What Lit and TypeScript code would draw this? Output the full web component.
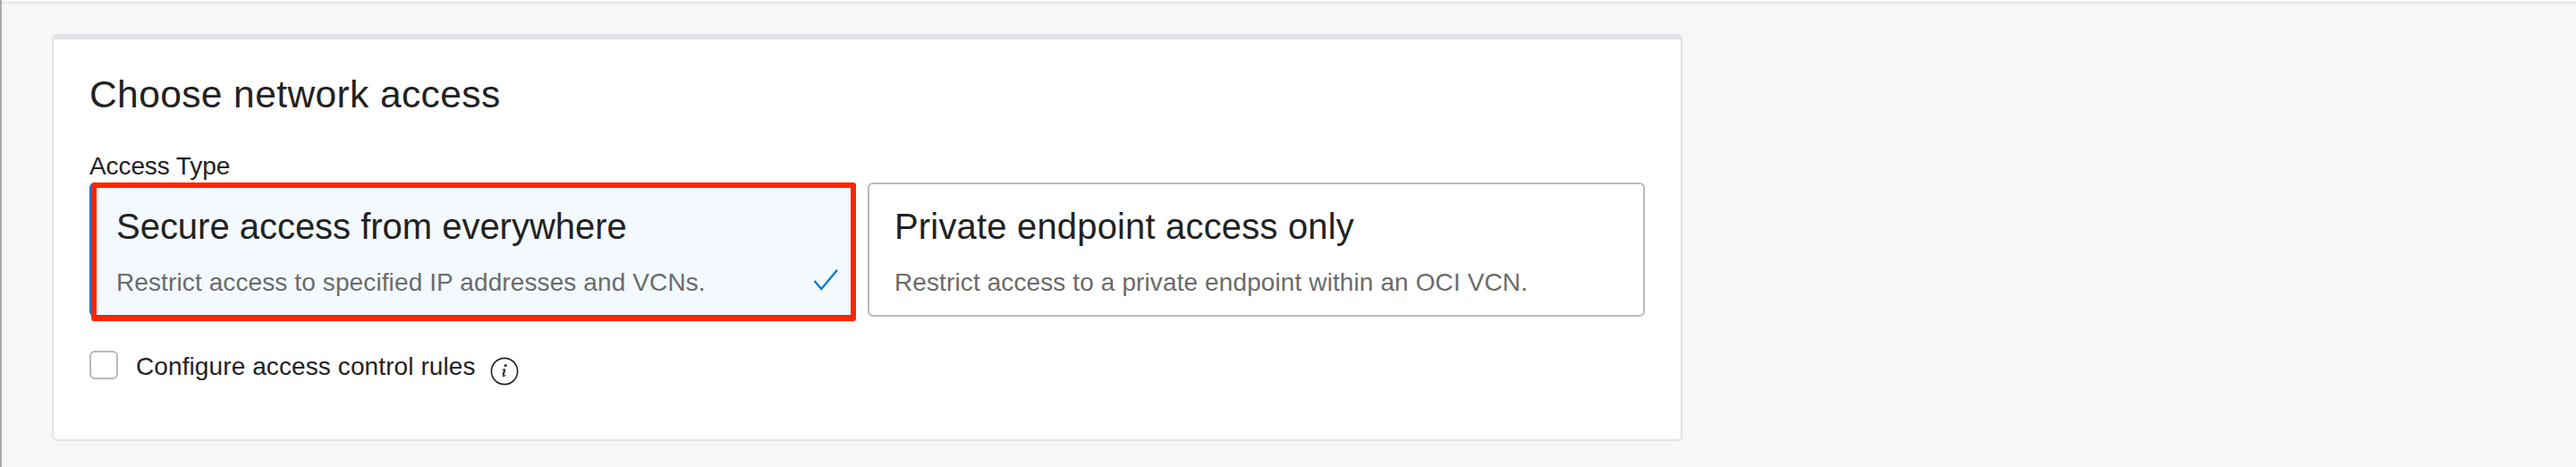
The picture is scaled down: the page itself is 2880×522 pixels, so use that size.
import { LitElement, html, css } from "lit";
import { customElement, property, state } from "lit/decorators.js";
import { classMap } from "lit/directives/class-map.js";

@customElement("access-option")
class AccessOption extends LitElement {
  @property() heading = "";
  @property() description = "";
  @property({ type: Boolean }) selected = false;
  @property({ type: Boolean }) highlighted = false;

  static styles = css`
    :host {
      display: block;
      position: relative;
    }
    .box {
      box-sizing: border-box;
      height: 150px;
      border: 2px solid #b4bac5;
      border-radius: 6px;
      padding: 24px 17px 0 28px;
      background: #fff;
      cursor: pointer;
    }
    .box.selected {
      border-color: #0572ce;
      background: #f3f9fe;
    }
    .heading {
      font-size: 40px;
      line-height: 46px;
      color: #222;
      letter-spacing: 0.17px;
      white-space: nowrap;
    }
    .selected .heading {
      letter-spacing: -0.02px;
    }
    .row {
      display: flex;
      justify-content: space-between;
      margin-top: 23px;
      height: 34px;
    }
    .description {
      font-size: 28px;
      line-height: 34px;
      color: #6b6b6b;
      letter-spacing: 0.11px;
      white-space: nowrap;
    }
    .check {
      width: 28px;
      height: 26px;
      margin-top: 1px;
    }
    .highlight {
      position: absolute;
      inset: 0 -1px -5px 2px;
      border: 6px solid #ff2600;
      border-radius: 3px;
      pointer-events: none;
    }
  `;

  render() {
    return html`
      <div class=${classMap({ box: true, selected: this.selected })}>
        <div class="heading">${this.heading}</div>
        <div class="row">
          <div class="description">${this.description}</div>
          ${this.selected
            ? html`<svg class="check" viewBox="0 0 28 26" fill="none" stroke="#0077d9" stroke-width="2.3">
                <path d="M1.600 14 9.300 23 27 1.800" />
              </svg>`
            : ""}
        </div>
      </div>
      ${this.highlighted ? html`<div class="highlight"></div>` : ""}
    `;
  }
}

@customElement("app-root")
class AppRoot extends LitElement {
  @state() private options = [
    {
      heading: "Secure access from everywhere",
      description: "Restrict access to specified IP addresses and VCNs.",
      selected: true,
    },
    {
      heading: "Private endpoint access only",
      description: "Restrict access to a private endpoint within an OCI VCN.",
      selected: false,
    },
  ];

  static styles = css`
    :host {
      display: block;
      box-sizing: border-box;
      height: 522px;
      border-left: 2px solid #a9a9a9;
      background: #f7f7f7;
      font-family: "Liberation Sans", Arial, sans-serif;
      color: #222;
      overflow: hidden;
    }
    .topbar {
      height: 2px;
      background: #fbfbfb;
      border-bottom: 2px solid #e6e6e6;
    }
    .panel {
      box-sizing: border-box;
      width: 1823px;
      height: 455px;
      margin: 34px 0 0 56px;
      border: 2px solid #e2e3e7;
      border-top-width: 6px;
      border-radius: 6px;
      background: #fff;
      padding: 37px 40px 0;
    }
    .title {
      margin: 0 0 38px;
      font-size: 42.5px;
      font-weight: 400;
      line-height: 50px;
      letter-spacing: 0.4px;
    }
    .label {
      font-size: 28px;
      line-height: 34px;
      letter-spacing: -0.1px;
      margin-bottom: 1px;
    }
    .options {
      display: grid;
      grid-template-columns: 856px 869px;
      gap: 14px;
    }
    .rules {
      display: flex;
      align-items: flex-start;
      margin-top: 38px;
    }
    .checkbox {
      box-sizing: border-box;
      width: 32px;
      height: 32px;
      border: 2px solid #b4bac5;
      border-radius: 6px;
      background: #fff;
    }
    .rules-label {
      margin: 1px 0 0 20px;
      font-size: 28px;
      line-height: 34px;
      letter-spacing: 0.1px;
    }
    .info {
      width: 32px;
      height: 32px;
      margin: 7px 0 0 16px;
    }
  `;

  render() {
    return html`
      <div class="topbar"></div>
      <section class="panel">
        <h2 class="title">Choose network access</h2>
        <div class="label">Access Type</div>
        <div class="options">
          ${this.options.map(
            (o) => html`<access-option
              .heading=${o.heading}
              .description=${o.description}
              .selected=${o.selected}
              .highlighted=${o.selected}
            ></access-option>`
          )}
        </div>
        <div class="rules">
          <div class="checkbox"></div>
          <div class="rules-label">Configure access control rules</div>
          <svg class="info" viewBox="0 0 32 32" fill="none" stroke="#222">
            <circle cx="16" cy="16" r="14.6" stroke-width="1.6" />
            <circle cx="17.2" cy="9.6" r="1.5" fill="#222" stroke="none" />
            <path d="M13.400 14h2.900l-1.700 6.600q-.4 1.400.6 1.100t2.100-1.500" stroke-width="1.100" />
            <path d="M16.200 13.800 14.700 20.200" stroke-width="2" />
          </svg>
        </div>
      </section>
    `;
  }
}
